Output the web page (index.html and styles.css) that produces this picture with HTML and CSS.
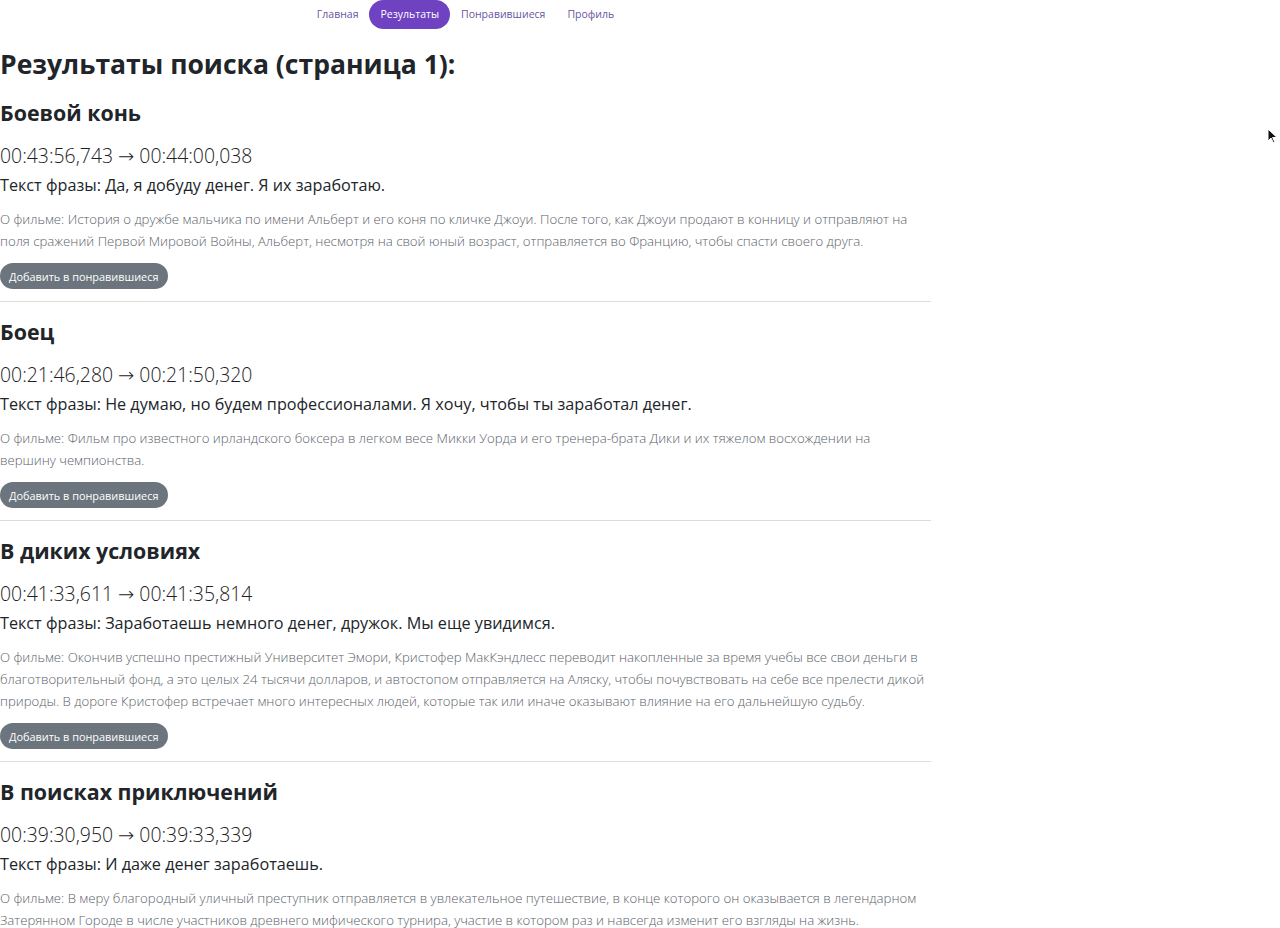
FILE: index.html
```html
<!DOCTYPE html>
<html lang="ru">
<head>
<meta charset="utf-8">
<title>Результаты поиска</title>
<link rel="stylesheet" href="styles.css">
</head>
<body>
<div class="container">
  <nav class="nav">
    <a class="nav-link" href="#">Главная</a>
    <a class="nav-link active" href="#">Результаты</a>
    <a class="nav-link" href="#">Понравившиеся</a>
    <a class="nav-link" href="#">Профиль</a>
  </nav>
  <h2 class="page-title">Результаты поиска (страница 1):</h2>

  <div class="result">
    <h3 class="film">Боевой конь</h3>
    <p class="time">00:43:56,743 → 00:44:00,038</p>
    <p class="phrase">Текст фразы: Да, я добуду денег. Я их заработаю.</p>
    <p class="about">О фильме: История о дружбе мальчика по имени Альберт и его коня по кличке Джоуи. После того, как Джоуи продают в конницу и отправляют на поля сражений Первой Мировой Войны, Альберт, несмотря на свой юный возраст, отправляется во Францию, чтобы спасти своего друга.</p>
    <button class="btn" type="button">Добавить в понравившиеся</button>
  </div>
  <hr class="sep">

  <div class="result">
    <h3 class="film">Боец</h3>
    <p class="time">00:21:46,280 → 00:21:50,320</p>
    <p class="phrase">Текст фразы: Не думаю, но будем профессионалами. Я хочу, чтобы ты заработал денег.</p>
    <p class="about">О фильме: Фильм про известного ирландского боксера в легком весе Микки Уорда и его тренера-брата Дики и их тяжелом восхождении на вершину чемпионства.</p>
    <button class="btn" type="button">Добавить в понравившиеся</button>
  </div>
  <hr class="sep">

  <div class="result">
    <h3 class="film">В диких условиях</h3>
    <p class="time">00:41:33,611 → 00:41:35,814</p>
    <p class="phrase">Текст фразы: Заработаешь немного денег, дружок. Мы еще увидимся.</p>
    <p class="about">О фильме: Окончив успешно престижный Университет Эмори, Кристофер МакКэндлесс переводит накопленные за время учебы все свои деньги в благотворительный фонд, а это целых 24 тысячи долларов, и автостопом отправляется на Аляску, чтобы почувствовать на себе все прелести дикой природы. В дороге Кристофер встречает много интересных людей, которые так или иначе оказывают влияние на его дальнейшую судьбу.</p>
    <button class="btn" type="button">Добавить в понравившиеся</button>
  </div>
  <hr class="sep">

  <div class="result">
    <h3 class="film">В поисках приключений</h3>
    <p class="time">00:39:30,950 → 00:39:33,339</p>
    <p class="phrase">Текст фразы: И даже денег заработаешь.</p>
    <p class="about">О фильме: В меру благородный уличный преступник отправляется в увлекательное путешествие, в конце которого он оказывается в легендарном Затерянном Городе в числе участников древнего мифического турнира, участие в котором раз и навсегда изменит его взгляды на жизнь.</p>
    <button class="btn" type="button">Добавить в понравившиеся</button>
  </div>
  <hr class="sep">
</div>
<svg class="cursor" width="12" height="16" viewBox="0 0 12 16" aria-hidden="true">
  <path d="M1 1 L1 13 L4 10 L6.5 15 L8 14.3 L5.6 9.5 L10 9.5 Z" fill="#111" stroke="#fff" stroke-width="1"/>
</svg>
</body>
</html>
```

FILE: styles.css
```css
* { box-sizing: border-box; }
html, body { margin: 0; padding: 0; background: #fff; }
body {
  font-family: "Open Sans", "Noto Sans", "DejaVu Sans", sans-serif;
  color: #212529;
  position: relative;
  min-height: 928px;
}
.container {
  width: 931px;
}
.nav {
  display: flex;
  justify-content: center;
  align-items: center;
  height: 29px;
}
.nav-link {
  display: block;
  font-size: 10.5px;
  line-height: 29px;
  padding: 0 11px;
  color: #6a55a0;
  text-decoration: none;
  border-radius: 15px;
}
.nav-link.active {
  background: #6f42c1;
  color: #fff;
}
.page-title {
  margin: 17px 0 1px;
  font-size: 26.5px;
  line-height: 36px;
  font-weight: 700;
}
.result {
  padding-top: 17px;
}
.film {
  margin: 0;
  font-size: 21.4px;
  line-height: 26px;
  font-weight: 700;
}
.time {
  margin: 17px 0 0;
  font-size: 19.4px;
  line-height: 26px;
  font-weight: 300;
  color: #1d2125;
}
.phrase {
  margin: 4px 0 0;
  font-size: 16.2px;
  line-height: 24px;
  font-weight: 400;
}
.about {
  max-width: 927px;
  margin: 11px 0 0;
  font-size: 13.2px;
  line-height: 22px;
  font-weight: 300;
  color: #5b626a;
}
.btn {
  display: block;
  margin: 11px 0 0;
  height: 26px;
  padding: 0 9px;
  border: 0;
  border-radius: 13px;
  background: #6c757d;
  color: #fff;
  font-family: inherit;
  font-size: 10.9px;
}
.sep {
  margin: 12px 0 0;
  border: 0;
  border-top: 1px solid #dcdcdc;
}
.cursor {
  position: absolute;
  left: 1267px;
  top: 128px;
}
```
